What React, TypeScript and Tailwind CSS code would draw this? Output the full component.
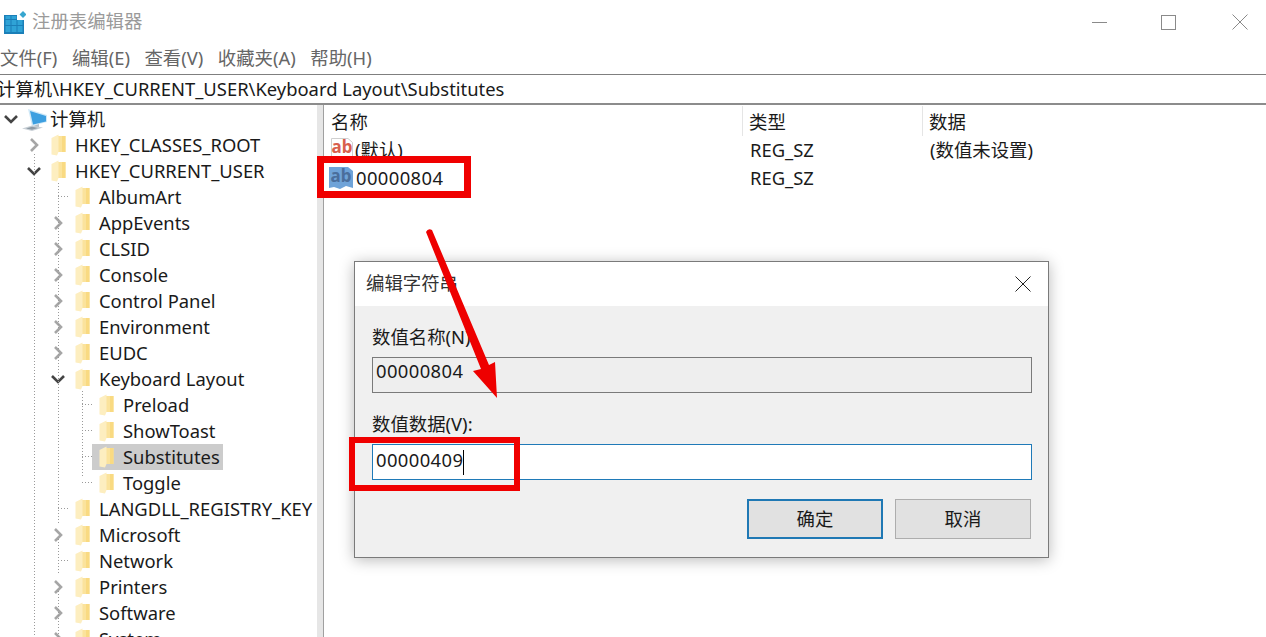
import React from 'react';

const FONT = "font-['Noto_Sans','Noto_Sans_CJK_SC',sans-serif]";

type TreeRow = { label: string; level: number; arrow?: 'open' | 'closed'; selected?: boolean };

const TREE_ROWS: TreeRow[] = [
  { label: 'HKEY_CLASSES_ROOT', level: 0, arrow: 'closed' },
  { label: 'HKEY_CURRENT_USER', level: 0, arrow: 'open' },
  { label: 'AlbumArt', level: 1 },
  { label: 'AppEvents', level: 1, arrow: 'closed' },
  { label: 'CLSID', level: 1, arrow: 'closed' },
  { label: 'Console', level: 1, arrow: 'closed' },
  { label: 'Control Panel', level: 1, arrow: 'closed' },
  { label: 'Environment', level: 1, arrow: 'closed' },
  { label: 'EUDC', level: 1, arrow: 'closed' },
  { label: 'Keyboard Layout', level: 1, arrow: 'open' },
  { label: 'Preload', level: 2 },
  { label: 'ShowToast', level: 2 },
  { label: 'Substitutes', level: 2, selected: true },
  { label: 'Toggle', level: 2 },
  { label: 'LANGDLL_REGISTRY_KEY', level: 1 },
  { label: 'Microsoft', level: 1, arrow: 'closed' },
  { label: 'Network', level: 1 },
  { label: 'Printers', level: 1, arrow: 'closed' },
  { label: 'Software', level: 1, arrow: 'closed' },
  { label: 'System', level: 1, arrow: 'closed' },
];

const Folder = () => (
  <svg width="15" height="22" viewBox="0 0 15 22" className="shrink-0">
    <path d="M5 2 H14.5 V18 H5 Z" fill="#fbe39c" />
    <path d="M11 2 H14.5 V18 H11 Z" fill="#f9da82" />
    <path d="M0.5 4 L7.5 0.5 V18 L6 21.5 L0.5 20.5 Z" fill="#fdeec0" />
  </svg>
);

const Chevron = ({ dir }: { dir: 'open' | 'closed' }) => (
  <svg width="16" height="16" viewBox="0 0 16 16" fill="none" className="shrink-0">
    {dir === 'open' ? (
      <path d="M2 5 L8 11 L14 5" stroke="#444444" strokeWidth="2.6" />
    ) : (
      <path d="M5 2 L11 8 L5 14" stroke="#a6a6a6" strokeWidth="2.6" />
    )}
  </svg>
);

const RegIcon = () => (
  <svg width="22" height="23" viewBox="0 0 22 23" className="shrink-0">
    <rect x="0" y="4" width="20" height="19" fill="#1b7fb8" />
    <path d="M1.5 9h5v5h-5zM7.5 9h5v5h-5zM13.5 9h5v5h-5zM1.5 15h5v6h-5zM7.5 15h5v6h-5zM13.5 15h5v6h-5zM1.5 5h5v3h-5zM7.5 5h5v3h-5z" fill="#2fa3d6" />
    <rect x="13" y="4" width="7" height="5" fill="#ffffff" />
    <path d="M19 0 L22.5 3.5 L19 7 L15.5 3.5 Z" fill="#37a6cf" />
  </svg>
);

const ComputerIcon = () => (
  <svg width="26" height="24" viewBox="0 0 26 24" className="shrink-0">
    <path d="M6 2 L25 8 L25 15 L10 19 Z" fill="#cfe8f7" />
    <path d="M8 4 L24 9 L24 14.5 L11 17.5 Z" fill="#3d9fe0" />
    <path d="M11 19 L17 17 L17 20 L12 21 Z" fill="#b5c0c9" />
    <path d="M0 21.5 L10 18.5 L21 20.5 L10 24 Z" fill="#c9d0d6" />
    <path d="M4 21.5 L10 19.7 L16 20.9 L10 22.7 Z" fill="#8e9aa4" />
  </svg>
);

const AbIcon = ({ tone }: { tone: 'red' | 'blue' }) =>
  tone === 'red' ? (
    <svg width="24" height="22" viewBox="0 0 24 22" className="shrink-0 mb-[4px]">
      <path d="M1.5 1.5 H18 L22.5 5.5 V20.5 H1.5 Z" fill="#ffffff" stroke="#cfcfcf" />
      <text x="1.5" y="16" fontSize="17" fontWeight="700" fill="#d8604c" fontFamily="Noto Sans">ab</text>
    </svg>
  ) : (
    <svg width="24" height="24" viewBox="0 0 24 24" className="shrink-0">
      <path d="M0 1 H19 L24 5 V22 L17 20 L11 23 L5 21 L0 22 Z" fill="#6fa3d8" />
      <text x="1.5" y="16" fontSize="17" fontWeight="700" fill="#4a6e9c" fontFamily="Noto Sans">ab</text>
    </svg>
  );

// dotted connector lines of the registry tree
const TreeLines = () => (
  <svg className="absolute left-0 top-0 pointer-events-none" width="317" height="533" fill="none">
    <g stroke="#9a9a9a" strokeDasharray="1 2">
      <path d="M34.5 49 V533" />
      <path d="M58.5 78 V418 M58.5 434 V470 M58.5 486 V533" />
      <path d="M58 91.5 H68 M58 403.5 H68 M58 455.5 H68" />
      <path d="M82.5 286 V373 M82 299.5 H92 M82 325.5 H92 M82 351.5 H92 M82 377.5 H92" />
    </g>
  </svg>
);

const TreeItem = ({ row }: { row: TreeRow }) => {
  const pad = row.level === 0 ? 'pl-[26px]' : row.level === 1 ? 'pl-[50px]' : 'pl-[74px]';
  return (
    <div className={`h-[26px] flex items-center ${pad}`}>
      <div className="w-4 flex justify-center shrink-0">{row.arrow && <Chevron dir={row.arrow} />}</div>
      <div className={`flex items-center h-[26px] pl-[7px] ml-[2px] pr-[3px] ${row.selected ? 'bg-[#cccccc]' : ''}`}>
        <Folder />
        <span className="ml-[9px] whitespace-nowrap">{row.label}</span>
      </div>
    </div>
  );
};

const RedBox = ({ className }: { className: string }) => (
  <div className={`absolute border-[#f00000] pointer-events-none ${className}`} />
);

const Menu = ['文件(F)', '编辑(E)', '查看(V)', '收藏夹(A)', '帮助(H)'];

export default function App() {
  return (
    <div className={`${FONT} relative w-[1266px] h-[637px] overflow-hidden bg-white text-[18.4px] leading-none text-[#1a1a1a]`}>
      {/* title bar */}
      <div className="h-[44px] flex items-center pl-[4px]">
        <RegIcon />
        <span className="ml-[6px] -mt-[1px] text-[#9a9a9a]">注册表编辑器</span>
        <div className="ml-auto flex items-center pr-[18px]">
          <div className="w-[15px] h-px bg-[#8a8a8a]" />
          <div className="ml-[54px] w-[15px] h-[15px] border border-[#8a8a8a]" />
          <svg className="ml-[56px]" width="16" height="16" viewBox="0 0 16 16" fill="none">
            <path d="M0.5 0.5 L15.5 15.5 M15.5 0.5 L0.5 15.5" stroke="#8a8a8a" />
          </svg>
        </div>
      </div>

      {/* menu bar */}
      <div className="h-[31px] pb-[2px] flex items-center gap-[14.5px] text-[#666666] border-b border-[#7f7f7f]">
        {Menu.map((m) => (
          <span key={m}>{m}</span>
        ))}
      </div>

      {/* address bar */}
      <div className="h-[30px] flex items-center -ml-[3px] border-b-2 border-[#8c8c8c] whitespace-nowrap">
        计算机\HKEY_CURRENT_USER\Keyboard Layout\Substitutes
      </div>

      <div className="flex h-[532px]">
        {/* tree pane */}
        <div className="relative w-[317px] shrink-0 overflow-hidden pt-[1px]">
          <TreeLines />
          <div className="h-[26px] flex items-center pl-[3px]">
            <Chevron dir="open" />
            <div className="ml-[3px]">
              <ComputerIcon />
            </div>
            <span className="ml-[2px]">计算机</span>
          </div>
          {TREE_ROWS.map((row) => (
            <TreeItem key={row.label} row={row} />
          ))}
        </div>

        {/* splitter */}
        <div className="w-[7px] shrink-0 bg-[#e6e6e6] border-r border-[#a0a0a0]" />

        {/* values pane */}
        <div className="flex-1 pl-[6px] pt-[1px]">
          <div className="h-[30px] flex items-center">
            <div className="w-[413px] pl-px pt-[3px] h-full flex items-center border-r border-[#e5e5e5]">名称</div>
            <div className="w-[180px] pl-[6px] pt-[3px] h-full flex items-center border-r border-[#e5e5e5]">类型</div>
            <div className="pl-[6px] pt-[3px]">数据</div>
          </div>
          <div className="h-[28px] flex items-center">
            <div className="w-[420px] flex items-center">
              <AbIcon tone="red" />
              <span className="ml-[1px]">(默认)</span>
            </div>
            <div className="w-[180px]">REG_SZ</div>
            <div>(数值未设置)</div>
          </div>
          <div className="h-[28px] flex items-center">
            <div className="w-[420px] flex items-center -ml-[1px]">
              <AbIcon tone="blue" />
              <span className="ml-[3px] tracking-[0.4px]">00000804</span>
            </div>
            <div className="w-[180px] ml-[1px]">REG_SZ</div>
          </div>
        </div>
      </div>

      {/* edit string dialog */}
      <div className="absolute left-[354px] top-[261px] w-[695px] h-[297px] border border-[#7a7a7a] bg-[#f0f0f0] shadow-[0_2px_14px_rgba(0,0,0,0.28)] flex flex-col">
        <div className="h-[44px] shrink-0 bg-white flex items-center justify-between pl-[11px] pr-[17px]">
          <span className="text-[#333333] -mt-[1px]">编辑字符串</span>
          <svg width="16" height="16" viewBox="0 0 16 16" fill="none">
            <path d="M0.5 0.5 L15.5 15.5 M15.5 0.5 L0.5 15.5" stroke="#222222" />
          </svg>
        </div>
        <div className="flex-1 pl-[17px] pr-[16px] flex flex-col">
          <div className="h-[51px] flex items-end pb-[11px]">数值名称(N):</div>
          <div className="h-[36px] border border-[#7a7a7a] bg-[#eeeeee] flex items-center pl-[3px] pb-[7px] tracking-[0.4px]">00000804</div>
          <div className="h-[51px] flex items-end pb-[11px]">数值数据(V):</div>
          <div className="h-[36px] border border-[#1f7ab8] bg-white flex items-center pl-[3px]">
            <span className="pb-[4px] tracking-[0.4px]">00000409</span>
            <div className="w-px h-[25px] bg-black" />
          </div>
          <div className="mt-[19px] flex justify-end gap-[12px] pr-px">
            <div className="w-[136px] h-[40px] border-2 border-[#1f78b4] bg-[#e1e1e1] flex items-center justify-center">确定</div>
            <div className="w-[136px] h-[40px] border border-[#adadad] bg-[#e1e1e1] flex items-center justify-center">取消</div>
          </div>
        </div>
      </div>

      {/* red annotations */}
      <RedBox className="left-[317px] top-[156px] w-[154px] h-[42px] border-[7px]" />
      <RedBox className="left-[349px] top-[437px] w-[171px] h-[54px] border-[6px]" />
      <svg className="absolute left-0 top-0 pointer-events-none" width="1266" height="637">
        <path d="M426 232 Q428 228 432 230 L489 365 L495 362 L497 398 L473 371 L481 369 Z" fill="#ee0000" />
      </svg>
    </div>
  );
}
